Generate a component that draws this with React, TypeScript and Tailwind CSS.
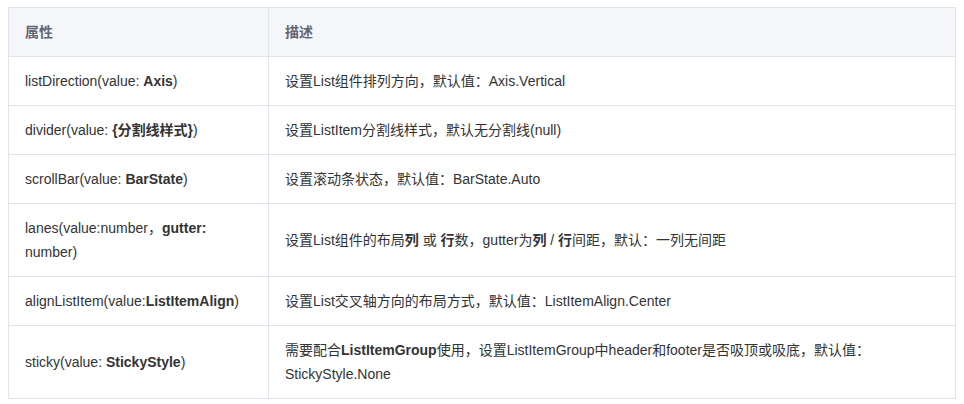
import React from 'react';

interface Row {
  prop: React.ReactNode;
  desc: React.ReactNode;
}

const rows: Row[] = [
  {
    prop: (
      <>
        listDirection(value: <b>Axis</b>)
      </>
    ),
    desc: '设置List组件排列方向，默认值：Axis.Vertical',
  },
  {
    prop: (
      <>
        divider(value: <b>{'{分割线样式}'}</b>)
      </>
    ),
    desc: '设置ListItem分割线样式，默认无分割线(null)',
  },
  {
    prop: (
      <>
        scrollBar(value: <b>BarState</b>)
      </>
    ),
    desc: '设置滚动条状态，默认值：BarState.Auto',
  },
  {
    prop: (
      <>
        lanes(value:number，<b>gutter:</b>
        <br />
        number)
      </>
    ),
    desc: (
      <>
        设置List组件的布局<b>列</b> 或 <b>行</b>数，gutter为<b>列</b> / <b>行</b>间距，默认：一列无间距
      </>
    ),
  },
  {
    prop: (
      <>
        alignListItem(value:<b>ListItemAlign</b>)
      </>
    ),
    desc: '设置List交叉轴方向的布局方式，默认值：ListItemAlign.Center',
  },
  {
    prop: (
      <>
        sticky(value: <b>StickyStyle</b>)
      </>
    ),
    desc: (
      <>
        需要配合<b>ListItemGroup</b>使用，设置ListItemGroup中header和footer是否吸顶或吸底，默认值：
        <br />
        StickyStyle.None
      </>
    ),
  },
];

const App: React.FC = () => {
  return (
    <div
      className="bg-white w-[964px] h-[404px] px-2 pt-[7px]"
      style={{ fontFamily: '"Liberation Sans", "Noto Sans CJK SC", sans-serif' }}
    >
      <table className="w-[948px] border-collapse text-[14px] leading-6 text-[#333]">
        <thead>
          <tr className="bg-[#f5f6fa]">
            <th className="w-[260px] border border-[#e1e3ed] pl-4 py-3 text-left font-bold text-[#636672]">
              属性
            </th>
            <th className="border border-[#e1e3ed] pl-4 py-3 text-left font-bold text-[#636672]">
              描述
            </th>
          </tr>
        </thead>
        <tbody>
          {rows.map((r, i) => (
            <tr key={i}>
              <td className="border border-[#e1e3ed] pl-4 pr-2 py-3 align-middle">{r.prop}</td>
              <td className="border border-[#e1e3ed] pl-4 pr-2 py-3 align-middle">{r.desc}</td>
            </tr>
          ))}
        </tbody>
      </table>
    </div>
  );
};

export default App;
